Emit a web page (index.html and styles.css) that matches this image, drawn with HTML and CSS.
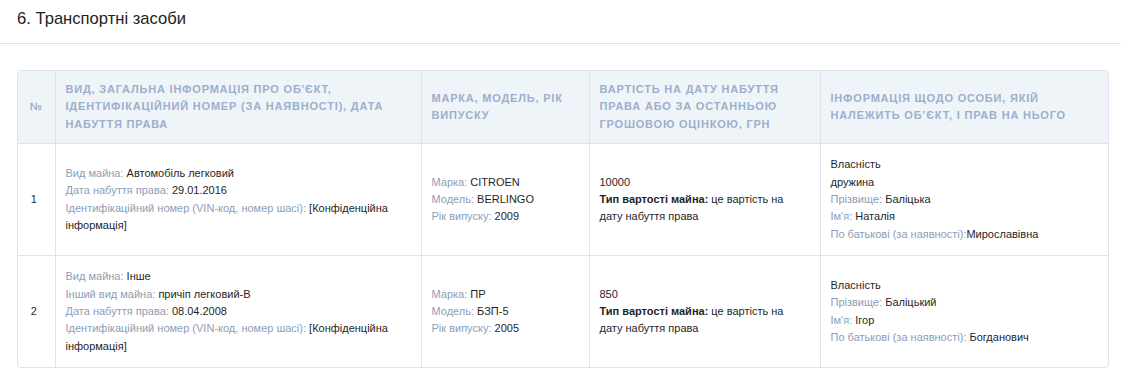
FILE: index.html
```html
<!DOCTYPE html>
<html lang="uk">
<head>
<meta charset="utf-8">
<title>Транспортні засоби</title>
<link rel="stylesheet" href="styles.css">
</head>
<body>
<div class="section-head">
  <h2 class="section-title">6. Транспортні засоби</h2>
</div>
<div class="table-wrap">
  <table class="decl-table">
    <colgroup>
      <col class="c-num">
      <col class="c-info">
      <col class="c-brand">
      <col class="c-cost">
      <col class="c-owner">
    </colgroup>
    <thead>
      <tr>
        <th class="num">№</th>
        <th>Вид, загальна інформація про об'єкт, ідентифікаційний номер (за наявності), дата набуття права</th>
        <th>Марка, модель, рік випуску</th>
        <th>Вартість на дату набуття права або за останньою грошовою оцінкою, грн</th>
        <th>Інформація щодо особи, якій належить об’єкт, і прав на нього</th>
      </tr>
    </thead>
    <tbody>
      <tr>
        <td class="num">1</td>
        <td>
          <div><span class="lbl">Вид майна:</span> Автомобіль легковий</div>
          <div><span class="lbl">Дата набуття права:</span> 29.01.2016</div>
          <div><span class="lbl">Ідентифікаційний номер (VIN-код, номер шасі):</span> [Конфіденційна інформація]</div>
        </td>
        <td>
          <div><span class="lbl">Марка:</span> CITROEN</div>
          <div><span class="lbl">Модель:</span> BERLINGO</div>
          <div><span class="lbl">Рік випуску:</span> 2009</div>
        </td>
        <td class="cost">
          <div>10000</div>
          <div><b>Тип вартості майна:</b> це вартість на дату набуття права</div>
        </td>
        <td>
          <div>Власність</div>
          <div>дружина</div>
          <div><span class="lbl">Прізвище:</span> Баліцька</div>
          <div><span class="lbl">Ім'я:</span> Наталія</div>
          <div><span class="lbl">По батькові (за наявності):</span>Мирославівна</div>
        </td>
      </tr>
      <tr>
        <td class="num">2</td>
        <td>
          <div><span class="lbl">Вид майна:</span> Інше</div>
          <div><span class="lbl">Інший вид майна:</span> причіп легковий-В</div>
          <div><span class="lbl">Дата набуття права:</span> 08.04.2008</div>
          <div><span class="lbl">Ідентифікаційний номер (VIN-код, номер шасі):</span> [Конфіденційна інформація]</div>
        </td>
        <td>
          <div><span class="lbl">Марка:</span> ПР</div>
          <div><span class="lbl">Модель:</span> БЗП-5</div>
          <div><span class="lbl">Рік випуску:</span> 2005</div>
        </td>
        <td class="cost">
          <div>850</div>
          <div><b>Тип вартості майна:</b> це вартість на дату набуття права</div>
        </td>
        <td>
          <div>Власність</div>
          <div><span class="lbl">Прізвище:</span> Баліцький</div>
          <div><span class="lbl">Ім'я:</span> Ігор</div>
          <div><span class="lbl">По батькові (за наявності):</span> Богданович</div>
        </td>
      </tr>
    </tbody>
  </table>
</div>
</body>
</html>
```

FILE: styles.css
```css
html, body {
  margin: 0;
  padding: 0;
  background: #ffffff;
  font-family: "Liberation Sans", Arial, sans-serif;
  color: #1f1f1f;
}

.section-head {
  border-bottom: 1px solid #e2e2e2;
  padding: 9px 17px 0;
  height: 34px;
}

.section-title {
  margin: 0;
  font-size: 16.6px;
  font-weight: normal;
  line-height: 20px;
  color: #222;
}

.table-wrap {
  margin: 26px 0 0 17px;
  width: 1090px;
  border: 1px solid #dfe3e9;
  border-radius: 4px;
  overflow: hidden;
}

.decl-table {
  width: 100%;
  border-collapse: collapse;
  table-layout: fixed;
}

.c-num { width: 37px; }
.c-info { width: 366px; }
.c-brand { width: 168px; }
.c-cost { width: 231px; }
.c-owner { width: auto; }

.decl-table th,
.decl-table td {
  border-left: 1px solid #dfe3e9;
  border-top: 1px solid #dfe3e9;
  text-align: left;
  vertical-align: middle;
}

.decl-table th:first-child,
.decl-table td:first-child {
  border-left: none;
}

.decl-table thead th {
  border-top: none;
  background: #eff4f9;
  color: #9cafcc;
  font-size: 11px;
  font-weight: bold;
  text-transform: uppercase;
  letter-spacing: 0.8px;
  line-height: 17.4px;
  padding: 10px 10px;
  height: 52px;
}

.decl-table td {
  font-size: 11px;
  line-height: 17.4px;
  padding: 12px 10px;
  color: #1f1f1f;
}

.decl-table td.cost {
  padding-right: 14px;
}

.decl-table th.num {
  text-align: center;
  padding-left: 2px;
  padding-right: 2px;
}

.decl-table td.num {
  text-align: center;
  padding-left: 0;
  padding-right: 5px;
}

.lbl {
  color: #8d9db6;
}

.decl-table b {
  font-weight: bold;
}
```
